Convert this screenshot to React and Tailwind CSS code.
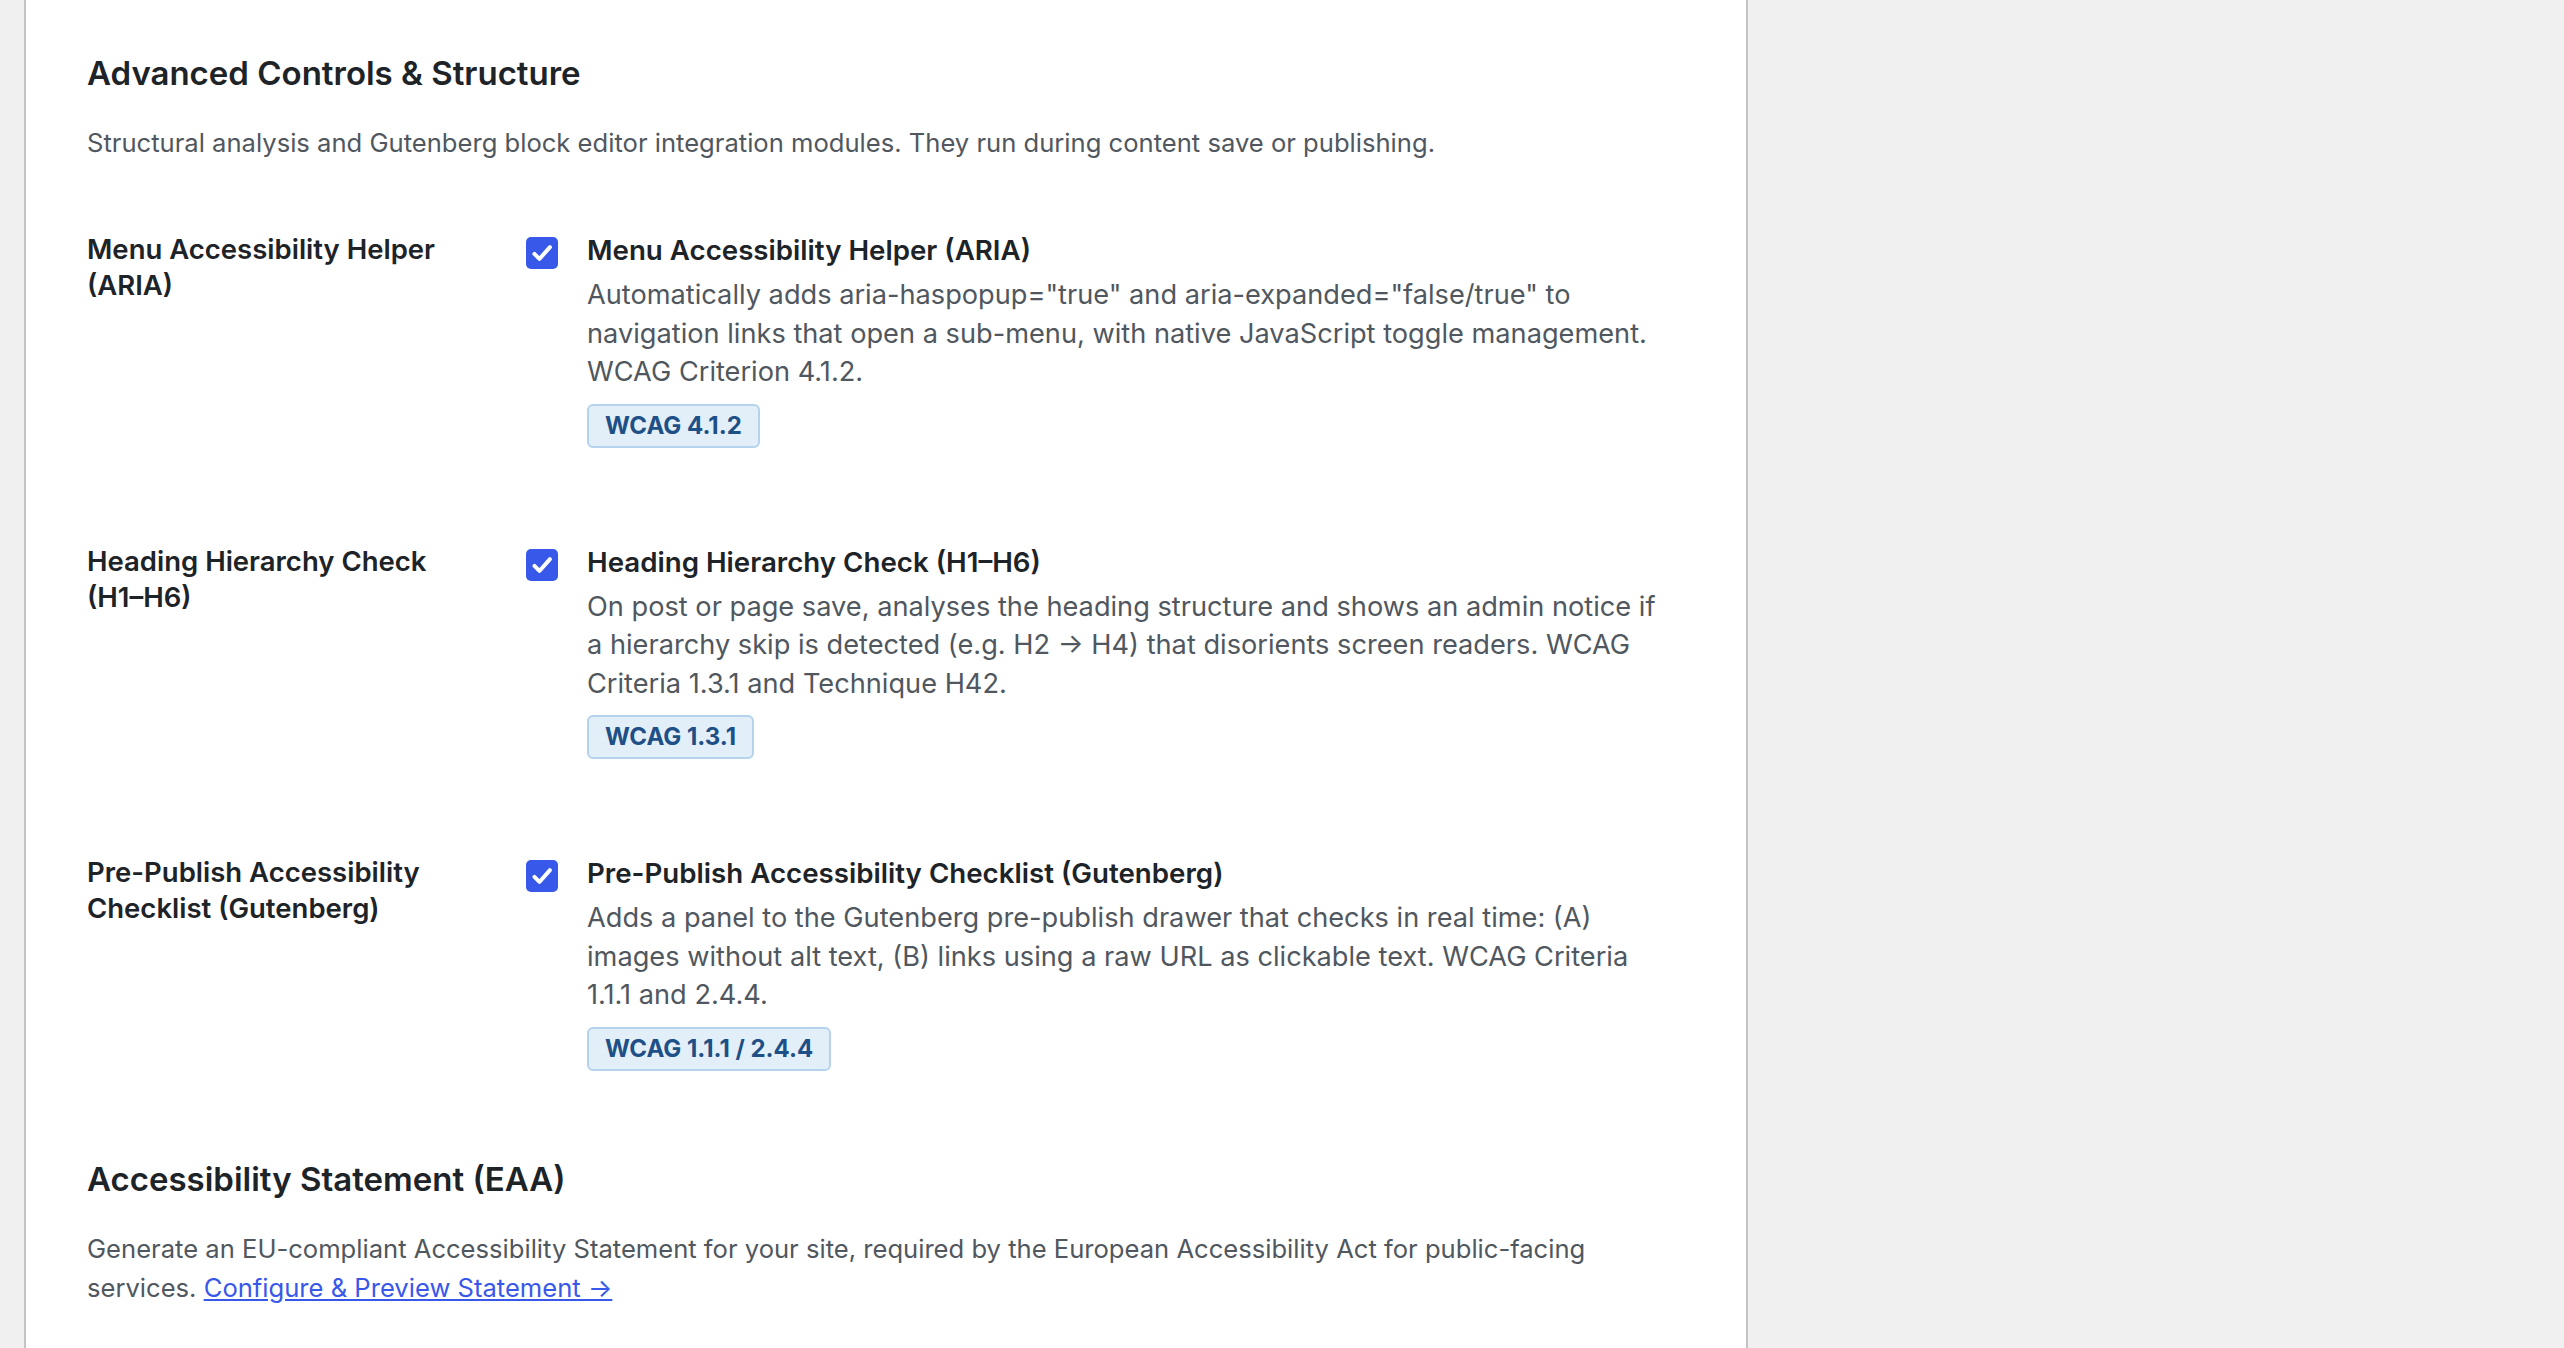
import React from "react";

const rows = [
  {
    label: "Menu Accessibility Helper (ARIA)",
    title: "Menu Accessibility Helper (ARIA)",
    desc: 'Automatically adds aria-haspopup="true" and aria-expanded="false/true" to navigation links that open a sub-menu, with native JavaScript toggle management. WCAG Criterion 4.1.2.',
    badge: "WCAG 4.1.2",
  },
  {
    label: "Heading Hierarchy Check (H1–H6)",
    title: "Heading Hierarchy Check (H1–H6)",
    desc: "On post or page save, analyses the heading structure and shows an admin notice if a hierarchy skip is detected (e.g. H2 → H4) that disorients screen readers. WCAG Criteria 1.3.1 and Technique H42.",
    badge: "WCAG 1.3.1",
  },
  {
    label: "Pre-Publish Accessibility Checklist (Gutenberg)",
    title: "Pre-Publish Accessibility Checklist (Gutenberg)",
    desc: "Adds a panel to the Gutenberg pre-publish drawer that checks in real time: (A) images without alt text, (B) links using a raw URL as clickable text. WCAG Criteria 1.1.1 and 2.4.4.",
    badge: "WCAG 1.1.1 / 2.4.4",
  },
];

const CheckBox = () => (
  <span className="mt-[6px] flex h-[32px] w-[32px] shrink-0 items-center justify-center rounded-[5px] bg-[#3858e9]">
    <svg viewBox="0 0 24 24" className="h-[28px] w-[28px]" fill="none" stroke="white" strokeWidth="3.4" strokeLinecap="round" strokeLinejoin="round">
      <path d="M5.5 12.8l4.3 4.3L18.8 7" />
    </svg>
  </span>
);

const ModuleRow = ({ label, title, desc, badge, first }) => (
  <div className={`flex ${first ? "mt-[69px]" : "mt-[95px]"}`}>
    <div className="w-[439px] shrink-0 pr-[40px] text-[27.5px] font-semibold leading-[36px] text-[#1d2327]">
      {label}
    </div>
    <CheckBox />
    <div className="ml-[29px] flex-1 pr-[18px]">
      <div className="text-[27.7px] font-semibold leading-[38px] text-[#1d2327]">{title}</div>
      <p className="mt-[7px] text-[27.2px] leading-[38.5px] text-[#50575e]">{desc}</p>
      <span className="mt-[12px] inline-block rounded-[6px] border-2 border-[#b5d3ec] bg-[#e2eff9] px-[16px] text-[24px] font-bold leading-[40px] text-[#1e4f86]">
        {badge}
      </span>
    </div>
  </div>
);

export default function App() {
  return (
    <div className="flex min-h-screen bg-[#f0f0f1]" style={{ fontFamily: "Inter, 'Noto Sans', sans-serif" }}>
      <div className="ml-[24px] w-[1724px] border-x-2 border-[#c3c4c7] bg-white px-[61px] pt-[51px] pb-[60px]">
        <h2 className="text-[33px] font-semibold leading-[44px] text-[#1d2327]">Advanced Controls &amp; Structure</h2>
        <p className="mt-[28px] text-[25.6px] leading-[39px] text-[#50575e]">
          Structural analysis and Gutenberg block editor integration modules. They run during content save or publishing.
        </p>

        {rows.map((r, i) => (
          <ModuleRow key={r.badge} {...r} first={i === 0} />
        ))}

        <h2 className="mt-[86px] text-[33px] font-semibold leading-[44px] text-[#1d2327]">Accessibility Statement (EAA)</h2>
        <p className="mt-[28px] text-[25.6px] leading-[39px] text-[#50575e]">
          Generate an EU-compliant Accessibility Statement for your site, required by the European Accessibility Act for public-facing services.{" "}
          <a href="#" className="text-[#3858e9] underline">
            Configure &amp; Preview Statement →
          </a>
        </p>
      </div>
    </div>
  );
}
